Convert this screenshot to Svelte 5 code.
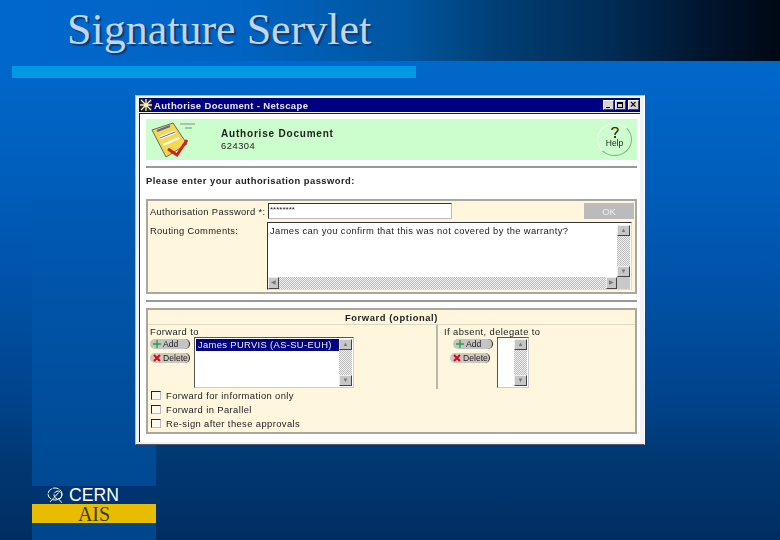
<script lang="ts">
  const warranty = 'James can you confirm that this was not covered by the warranty?';
  const options = ['Forward for information only', 'Forward in Parallel', 'Re-sign after these approvals'];
</script>

{#snippet scrollV(height: number)}
  <div class="scroll-v" style="height: {height}px">
    <span class="sb-btn">▲</span>
    <span class="sb-track"></span>
    <span class="sb-btn">▼</span>
  </div>
{/snippet}

{#snippet pills()}
  <button class="pill">
    <svg width="8" height="8" viewBox="0 0 8 8"><path d="M4 0v8M0 4h8" stroke="#2e9e3e" stroke-width="1.4" /></svg>
    Add
  </button>
  <button class="pill del">
    <svg width="8" height="8" viewBox="0 0 8 8"><path d="M1 1l6 6M7 1l-6 6" stroke="#d01020" stroke-width="2.2" /></svg>
    Delete
  </button>
{/snippet}

<div class="slide">
  <header><h1>Signature Servlet</h1></header>
  <div class="stripe"></div>

  <section class="window">
    <div class="titlebar">
      <svg width="12" height="12" viewBox="0 0 12 12">
        <rect width="12" height="12" fill="#222" />
        <path d="M6 0v12M0 6h12M1 1l10 10M11 1L1 11" stroke="#f4f0c8" stroke-width="1.3" />
      </svg>
      <span class="title-text">Authorise Document - Netscape</span>
      <div class="controls">
        <span class="ctl"><i class="min"></i></span>
        <span class="ctl"><i class="max"></i></span>
        <span class="ctl close">×</span>
      </div>
    </div>

    <div class="content">
      <div class="banner">
        <svg class="doc" width="44" height="36" viewBox="0 0 44 36">
          <path d="M1 8L22 1l14 21-21 13z" fill="#f5d850" stroke="#666" stroke-width="1" />
          <path d="M6 9l13-5" stroke="#5566aa" stroke-width="2" />
          <path d="M9 16l15-6" stroke="#fff" stroke-width="3" />
          <path d="M9 16l15-6" stroke="#5566aa" stroke-width="1" />
          <path d="M12 23l16-7" stroke="#fff" stroke-width="2" />
          <path d="M29 2h15" stroke="#888" stroke-width="1" />
          <path d="M34 6h7" stroke="#6a9a80" stroke-width="1" />
          <path d="M17 27l9 6 10-15" fill="none" stroke="#d02020" stroke-width="3" />
        </svg>
        <div class="banner-text">
          <strong>Authorise Document</strong>
          <span>624304</span>
        </div>
        <div class="help">
          <svg width="10" height="11" viewBox="0 0 10 11">
            <path d="M2 3c0-3 6-3 6 0 0 2-3 2-3 5" fill="none" stroke="#333" stroke-width="1.6" />
            <path d="M3 3c0-2 4-2 4 0" fill="none" stroke="#e8c820" stroke-width="1" />
            <rect x="4" y="9" width="2" height="2" fill="#333" />
          </svg>
          <span>Help</span>
        </div>
      </div>
      <div class="rule"></div>
      <p class="prompt">Please enter your authorisation password:</p>

      <div class="panel auth">
        <label for="pw">Authorisation Password *:</label>
        <div class="pw-row">
          <input id="pw" type="text" value="********" readonly />
          <button class="ok">OK</button>
        </div>
        <span class="routing">Routing Comments:</span>
        <div class="textarea">
          <div class="ta-main">
            <div class="ta-text">{warranty}</div>
            {@render scrollV(52)}
          </div>
          <div class="scroll-h">
            <span class="sb-btn">◀</span>
            <span class="sb-track"></span>
            <span class="sb-btn">▶</span>
            <span class="sb-corner"></span>
          </div>
        </div>
      </div>

      <div class="rule second"></div>

      <div class="panel forward">
        <div class="fw-title">Forward (optional)</div>
        <div class="fw-cols">
          <div class="fw-left">
            <span class="fw-label">Forward to</span>
            <div class="fw-row">
              <div class="pills">{@render pills()}</div>
              <div class="list wide">
                <div class="list-body"><div class="selected">James PURVIS (AS-SU-EUH)</div></div>
                {@render scrollV(47)}
              </div>
            </div>
          </div>
          <div class="fw-right">
            <span class="fw-label">If absent, delegate to</span>
            <div class="fw-row">
              <div class="pills">{@render pills()}</div>
              <div class="list narrow">
                <div class="list-body"></div>
                {@render scrollV(47)}
              </div>
            </div>
          </div>
        </div>
        <div class="checks">
          {#each options as option}
            <div class="check"><span class="box"></span>{option}</div>
          {/each}
        </div>
      </div>
    </div>
  </section>

  <footer>
    <div class="cern">
      <svg width="18" height="17" viewBox="0 0 18 17">
        <g fill="none" stroke="#fff" stroke-width="1" stroke-dasharray="6 1">
          <ellipse cx="8" cy="7" rx="7" ry="6" />
          <circle cx="11" cy="8" r="4" />
          <path d="M3 15L14 3M11 11l4 5" />
        </g>
      </svg>
      <span>CERN</span>
    </div>
    <div class="ais">AIS</div>
  </footer>
</div>

<style>
  :global(body) {
    margin: 0;
  }

  .slide {
    width: 780px;
    height: 540px;
    overflow: hidden;
    font-family: 'Liberation Sans', Arial, sans-serif;
    background:
      linear-gradient(180deg, #005ab4 0, #00468c 100%) 32px 200px / 124px 340px no-repeat,
      linear-gradient(180deg, #0068cc 61px, #005cb8 200px, #0050a4 300px, #00438c 400px, #003872 460px, #002e62 540px);
  }

  header {
    height: 61px;
    padding-left: 67px;
    box-sizing: border-box;
    background: linear-gradient(90deg, #0068cc 0, #0064c4 30%, #00569f 52%, #003e74 64%, #002e58 77%, #001630 90%, #000814 100%);
  }

  h1 {
    margin: 0;
    padding-top: 5px;
    font: 400 44px/50px 'Liberation Serif', 'Times New Roman', serif;
    color: #c4d5ea;
    text-shadow: 2px 2px 1px #0a3c78;
  }

  .stripe {
    width: 404px;
    height: 12px;
    margin: 5px 0 0 12px;
    background: #0099e6;
  }

  .window {
    width: 510px;
    height: 350px;
    margin: 17px 0 0 135px;
    box-sizing: border-box;
    padding: 2px 4px 3px 3px;
    background: #f0f2f6;
    border: 1px solid #a8bcdc;
    border-right-color: #fff;
    border-bottom-color: #556;
    font-size: 9.4px;
    color: #222;
    filter: blur(0.35px);
  }

  .titlebar {
    height: 14px;
    display: flex;
    align-items: center;
    gap: 2px;
    padding: 0 1px;
    background: #000080;
    color: #e8e8f4;
    font-weight: 700;
    font-size: 9.5px;
    letter-spacing: 0.35px;
  }

  .controls {
    margin-left: auto;
    display: flex;
  }

  .ctl {
    width: 11px;
    height: 10px;
    margin-left: 1px;
    background: #d4d4d4;
    border: 1px solid;
    border-color: #fff #444 #444 #fff;
    box-sizing: border-box;
    position: relative;
    color: #000;
  }

  .ctl i {
    position: absolute;
    display: block;
  }

  .min {
    left: 2px;
    bottom: 1px;
    width: 4px;
    height: 1px;
    background: #000;
  }

  .max {
    left: 1px;
    top: 1px;
    width: 6px;
    height: 6px;
    border: 1px solid #000;
    border-top-width: 2px;
    box-sizing: border-box;
  }

  .close {
    margin-left: 2px;
    font-size: 11px;
    font-weight: 700;
    line-height: 7px;
    text-align: center;
  }

  .content {
    height: 329px;
    margin-top: 1px;
    box-sizing: border-box;
    padding: 5px 3px 0 6px;
    background: #fff;
    border-left: 1px solid #222;
    border-top: 1px solid #222;
  }

  .banner {
    height: 41px;
    display: flex;
    align-items: center;
    background: #ccfdcc;
  }

  .doc {
    margin-left: 5px;
  }

  .banner-text {
    display: flex;
    flex-direction: column;
    gap: 1px;
    margin-left: 26px;
    letter-spacing: 0.5px;
  }

  .banner-text strong {
    font-size: 10px;
    letter-spacing: 0.8px;
  }

  .help {
    margin-left: auto;
    margin-right: 5px;
    width: 35px;
    height: 33px;
    box-sizing: border-box;
    padding-top: 3px;
    border-radius: 50%;
    border: 1px solid;
    border-color: #f4fff4 #8aa88a #8aa88a #f4fff4;
    display: flex;
    flex-direction: column;
    align-items: center;
    font-size: 8.5px;
    line-height: 10px;
  }

  .rule {
    height: 2px;
    margin-top: 6px;
    background: #999;
  }

  .rule.second {
    margin-top: 6px;
  }

  .prompt {
    margin: 7px 0 13px;
    font-weight: 700;
    font-size: 9.4px;
    line-height: 11px;
    letter-spacing: 0.47px;
  }

  .panel {
    box-sizing: border-box;
    background: #fff6de;
    border: 2px solid #a8a8a0;
  }

  .auth {
    height: 95px;
    display: grid;
    grid-template-columns: 117px 1fr;
    grid-template-rows: 19px 1fr;
    padding: 2px 1px 2px 2px;
  }

  .auth label,
  .routing {
    letter-spacing: 0.32px;
    line-height: 13px;
    padding-top: 2px;
    white-space: nowrap;
  }

  .pw-row {
    display: flex;
    justify-content: space-between;
  }

  input {
    width: 184px;
    height: 16px;
    margin-left: 1px;
    box-sizing: border-box;
    border: 1px solid;
    border-color: #333 #bbb #bbb #333;
    padding: 0 1px 3px;
    font: 8px 'Liberation Sans', sans-serif;
    background: #fff;
    color: #222;
    outline: none;
  }

  .ok {
    width: 50px;
    height: 16px;
    padding: 0;
    border: 0;
    background: #bbb;
    color: #eee;
    font: 9.4px 'Liberation Sans', sans-serif;
  }

  .textarea {
    width: 365px;
    height: 68px;
    box-sizing: border-box;
    padding: 2px 1px 0 0;
    border: 1px solid;
    border-color: #333 #ddd #ddd #333;
    background: #fff;
    display: flex;
    flex-direction: column;
  }

  .ta-main {
    display: flex;
    flex: 1;
  }

  .ta-text {
    flex: 1;
    padding: 0 2px;
    letter-spacing: 0.37px;
  }

  .scroll-v {
    width: 13px;
    display: flex;
    flex-direction: column;
  }

  .scroll-h {
    height: 12px;
    display: flex;
  }

  .sb-btn {
    flex: none;
    width: 13px;
    height: 11px;
    box-sizing: border-box;
    background: #c6c6c6;
    border: 1px solid;
    border-color: #eee #444 #444 #eee;
    font-size: 6px;
    line-height: 9px;
    text-align: center;
    color: #777;
    overflow: hidden;
  }

  .scroll-h .sb-btn {
    width: 11px;
    height: 12px;
  }

  .sb-track {
    flex: 1;
    background: repeating-conic-gradient(#bbb 0 25%, #f2f2f2 0 50%) 0 0 / 2px 2px;
  }

  .sb-corner {
    width: 13px;
    background: #c8c8c8;
  }

  .forward {
    height: 126px;
    margin-top: 6px;
    display: flex;
    flex-direction: column;
  }

  .fw-title {
    height: 13px;
    padding-top: 1px;
    text-align: center;
    font-weight: 700;
    line-height: 13px;
    letter-spacing: 0.6px;
    border-bottom: 1px solid #ddd8c4;
  }

  .fw-cols {
    display: flex;
    height: 64px;
  }

  .fw-left {
    width: 286px;
    padding-left: 2px;
    border-right: 2px solid #b8b8ac;
  }

  .fw-right {
    padding-left: 6px;
  }

  .fw-label {
    display: block;
    height: 12px;
    line-height: 13px;
    letter-spacing: 0.4px;
  }

  .fw-row {
    display: flex;
    gap: 4px;
  }

  .fw-right .fw-row {
    padding-left: 9px;
  }

  .pills {
    width: 40px;
    display: flex;
    flex-direction: column;
    gap: 4px;
    padding-top: 2px;
  }

  .pill {
    width: 40px;
    height: 10px;
    padding: 0 0 0 3px;
    display: flex;
    align-items: center;
    gap: 2px;
    border: 0;
    border-radius: 5px;
    border-right: 1px solid #222;
    background: #c4c4c4;
    font: 8.6px/10px 'Liberation Sans', sans-serif;
    color: #222;
  }

  .pill.del {
    background: #cfc8c0;
  }

  .fw-right .pill.del {
    margin-left: -3px;
  }

  .list {
    height: 51px;
    box-sizing: border-box;
    display: flex;
    padding: 1px;
    background: #fff;
    border: 1px solid;
    border-color: #555 #ccc #ccc #555;
  }

  .list.wide {
    width: 160px;
  }

  .list.narrow {
    width: 32px;
  }

  .list-body {
    flex: 1;
  }

  .selected {
    height: 12px;
    padding-left: 2px;
    background: #000080;
    color: #eef;
    line-height: 12px;
    letter-spacing: 0.35px;
    white-space: nowrap;
  }

  .checks {
    padding: 2px 0 0 3px;
    display: flex;
    flex-direction: column;
    gap: 5px;
  }

  .check {
    height: 9px;
    display: flex;
    align-items: center;
    gap: 5px;
    line-height: 9px;
    letter-spacing: 0.4px;
  }

  .box {
    width: 10px;
    height: 9px;
    box-sizing: border-box;
    background: #fbf8ee;
    border: 1px solid;
    border-color: #222 #bbb #bbb #222;
  }

  footer {
    width: 124px;
    margin: 41px 0 0 32px;
  }

  .cern {
    height: 18px;
    display: flex;
    align-items: center;
    gap: 4px;
    padding-left: 15px;
    background: #003470;
    color: #fff;
    font-size: 17.6px;
  }

  .ais {
    height: 19px;
    background: #e8bc00;
    text-align: center;
    font: 20px/20px 'Liberation Serif', serif;
    color: #3a3a28;
  }
</style>
